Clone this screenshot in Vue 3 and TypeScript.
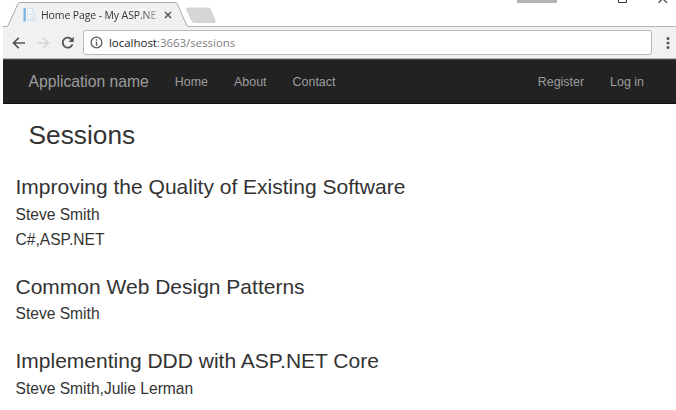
<script setup lang="ts">
interface Session {
  title: string
  speakers: string[]
  tags: string[]
}

const links: string[] = ['Home', 'About', 'Contact']
const accountLinks: string[] = ['Register', 'Log in']
const sessions: Session[] = [
  { title: 'Improving the Quality of Existing Software', speakers: ['Steve Smith'], tags: ['C#', 'ASP.NET'] },
  { title: 'Common Web Design Patterns', speakers: ['Steve Smith'], tags: [] },
  { title: 'Implementing DDD with ASP.NET Core', speakers: ['Steve Smith', 'Julie Lerman'], tags: [] },
]
</script>

<template>
  <div class="window">
    <div class="tab-strip">
      <svg class="strip-art" width="673" height="27" viewBox="3 0 673 27">
        <path d="M3 26.500H676" stroke="#b4b4b4" />
        <path d="M7 27L8 25.500L18 3.500Q19 2.500 20.500 2.500H174.500Q176.500 2.500 177.300 4L187 25.500L188.500 27Z" fill="#f1f1f1" />
        <path d="M3 26.500H6.500Q7.700 26.500 8.300 25L18 3.800Q18.700 2.500 20.500 2.500H174.500Q176.500 2.500 177.300 4L186.500 25Q187.300 26.500 188.500 26.500H190" fill="none" stroke="#a9a9a9" />
        <path d="M187.500 8H208.300Q209.800 8 210.400 9.400L215.200 21Q215.700 22.500 214.200 22.500H194.300Q192.800 22.500 192.100 21L186.600 9.400Q186 8 187.500 8Z" fill="#d6d6d6" stroke="#c9c9c9" stroke-width=".7" />
        <path d="M517 0H557V3H517Z" fill="#b3b3b3" />
        <path d="M618.500 0V2.500H626.500V0" fill="none" stroke="#333" />
        <path d="M658.500 2.800L662.700 -1.200L667 2.800" fill="none" stroke="#444" stroke-width="1.200" />
      </svg>
      <div class="tab">
        <svg class="favicon" width="14" height="14" viewBox="0 0 14 14">
          <path d="M.5 0H2.800V13.500H.5Z" fill="#78b5df" />
          <path d="M4.500 .5H10L12.500 3.500V13H4.500Z" fill="#f3f6f9" stroke="#dbe4eb" stroke-width=".8" />
          <path d="M9.500 1V4H12.500M5.500 6.500H12M7 9.500H12M5.500 11.500H12" fill="none" stroke="#d0dce5" />
        </svg>
        <span class="tab-title">Home Page - My ASP.NE</span>
        <svg class="close" width="8" height="8" viewBox="0 0 8 8"><path d="M1 1L7 7M7 1L1 7" stroke="#555" stroke-width="1.500" /></svg>
      </div>
    </div>

    <div class="toolbar">
      <svg class="nav-icons" width="80" height="31" viewBox="3 27 80 31" fill="none">
        <path d="M25 43H14M18.700 37.800L13.500 43L18.700 48.200" stroke="#555" stroke-width="1.700" />
        <path d="M37 43H48M43.300 37.800L48.500 43L43.300 48.200" stroke="#d3d3d3" stroke-width="1.500" />
        <path d="M71.700 39.600A5 5 0 1 0 72.500 44.200" stroke="#555" stroke-width="1.800" />
        <path d="M73.700 36.800V42H68.500Z" fill="#555" />
      </svg>
      <div class="address">
        <svg width="13" height="13" viewBox="0 0 13 13">
          <circle cx="6.500" cy="6.500" r="5.400" fill="none" stroke="#5c5c5c" stroke-width="1.300" />
          <path d="M6.500 5.700V9.700M6.500 3.300V4.700" stroke="#5c5c5c" stroke-width="1.400" />
        </svg>
        <span class="url"><span class="host">localhost</span>:3663/sessions</span>
      </div>
      <svg class="menu" width="4" height="14" viewBox="0 0 4 14" fill="#555">
        <circle cx="2" cy="2.500" r="1.500" /><circle cx="2" cy="7" r="1.500" /><circle cx="2" cy="11.500" r="1.500" />
      </svg>
    </div>

    <nav class="navbar">
      <a class="brand">Application name</a>
      <a v-for="link in links" :key="link" class="link">{{ link }}</a>
      <span class="spacer"></span>
      <a v-for="link in accountLinks" :key="link" class="link">{{ link }}</a>
    </nav>

    <main>
      <h2>Sessions</h2>
      <section v-for="session in sessions" :key="session.title">
        <h3>{{ session.title }}</h3>
        <p>{{ session.speakers.join(',') }}</p>
        <p v-if="session.tags.length">{{ session.tags.join(',') }}</p>
      </section>
    </main>
  </div>
</template>

<style>
body {
  background: #fff;
  overflow: hidden;
}
</style>

<style scoped>
.window {
  box-sizing: border-box;
  width: 676px;
  height: 410px;
  padding-left: 3px;
  overflow: hidden;
  background: #fff;
  color: #333;
  font-family: "Liberation Sans", Arial, sans-serif;
}
.tab-strip {
  position: relative;
  height: 27px;
}
.strip-art {
  position: absolute;
  top: 0;
  left: 0;
}
.tab {
  position: relative;
  display: flex;
  align-items: center;
  width: 170px;
  height: 27px;
  padding: 2px 0 0 20px;
  box-sizing: border-box;
}
.favicon {
  flex: none;
  margin-right: 4px;
}
.tab-title {
  width: 118px;
  flex: none;
  white-space: nowrap;
  font: 10.5px/16px "Open Sans", sans-serif;
  letter-spacing: -.12px;
  color: #333;
  -webkit-mask-image: linear-gradient(90deg, #000 84%, rgba(0, 0, 0, .3));
  mask-image: linear-gradient(90deg, #000 84%, rgba(0, 0, 0, .3));
}
.close {
  flex: none;
  margin-left: 5px;
}
.toolbar {
  box-sizing: border-box;
  display: flex;
  align-items: center;
  height: 32px;
  background: #f1f1f1;
  border-bottom: 1px solid #b5b5b5;
}
.nav-icons {
  flex: none;
}
.address {
  box-sizing: border-box;
  display: flex;
  align-items: center;
  gap: 6px;
  width: 569px;
  height: 25px;
  padding-left: 6px;
  background: #fff;
  border: 1px solid #b9b9b9;
  border-radius: 3px;
}
.url {
  font: 11.5px/18px "Open Sans", sans-serif;
  letter-spacing: -.03px;
  color: #808080;
}
.host {
  color: #222;
}
.menu {
  margin-left: 14px;
}
.navbar {
  box-sizing: border-box;
  display: flex;
  align-items: center;
  height: 45px;
  padding: 0 32px 0 25.5px;
  background: #222;
  border-top: 1px solid #444;
  border-bottom: 1px solid #101010;
  color: #9d9d9d;
  white-space: nowrap;
}
.brand {
  font-size: 15.7px;
}
.link {
  margin-left: 26px;
  font-size: 12.45px;
}
.spacer {
  flex: 1;
}
main {
  padding: 15px 0 0 12.5px;
}
h2 {
  margin: 0 0 22px;
  padding-left: 13px;
  font-size: 26.3px;
  line-height: 32px;
  font-weight: 400;
}
section {
  margin-bottom: 20.2px;
}
h3 {
  margin: 0;
  font-size: 21px;
  line-height: 28px;
  font-weight: 400;
}
p {
  margin: 0;
  font-size: 15.6px;
  line-height: 25.3px;
}
h3 + p {
  padding-top: .8px;
}
</style>
